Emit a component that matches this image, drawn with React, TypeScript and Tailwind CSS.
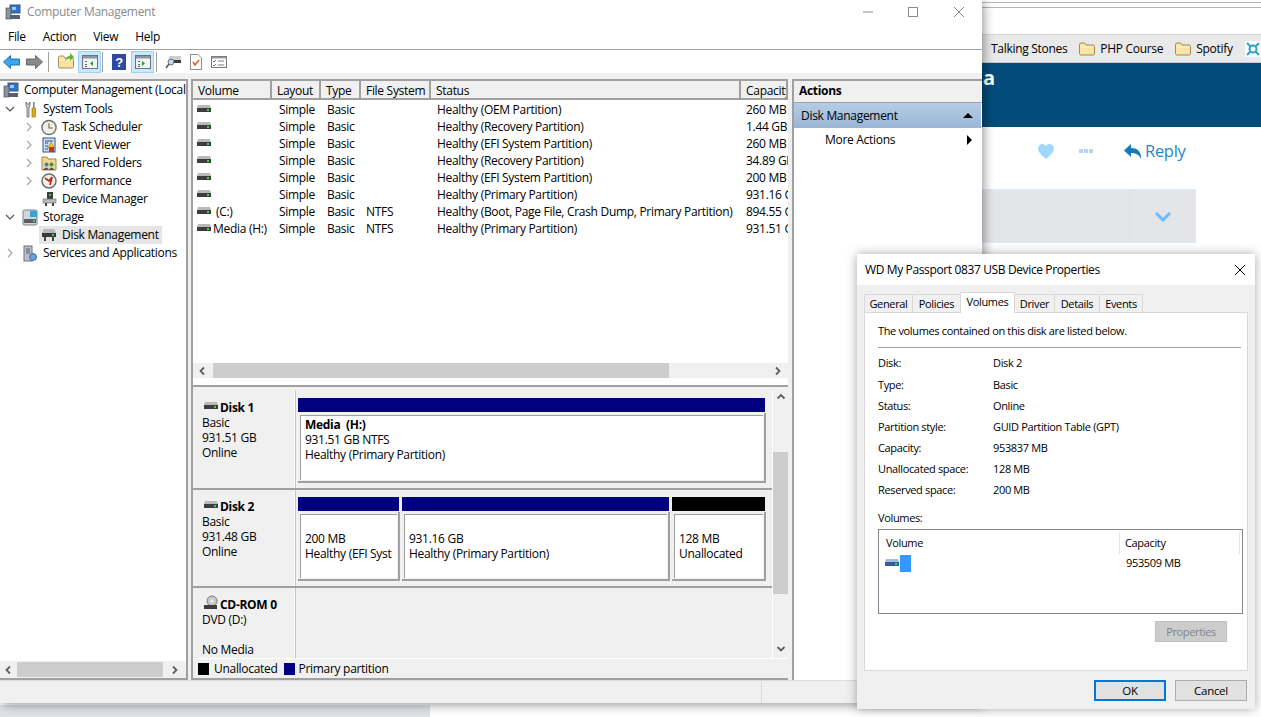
import React from "react";

const Chevron = ({ dir, className = "" }: { dir: "l" | "r" | "u" | "d"; className?: string }) => {
  const d = { l: "M6 1.5 2.5 5 6 8.5", r: "M3 1.5 6.5 5 3 8.5", u: "M1.5 6.5 5 3l3.5 3.5", d: "M1.5 3 5 6.5 8.5 3" }[dir];
  return (
    <svg width="10" height="10" viewBox="0 0 10 10" className={className} fill="none" stroke="#606060" strokeWidth="1.8">
      <path d={d} />
    </svg>
  );
};

const TreeChevron = ({ open }: { open?: boolean }) => (
  <svg width="10" height="10" viewBox="0 0 10 10" fill="none" stroke={open ? "#555" : "#a6a6a6"} strokeWidth="1.2">
    <path d={open ? "M1 3 5 7l4-4" : "M3 1l4 4-4 4"} />
  </svg>
);

const Drive = ({ light }: { light?: boolean }) => (
  <svg width="14" height="8" viewBox="0 0 14 8" className="shrink-0">
    <path d="M1 0h12l1 3H0z" fill={light ? "#9cc0e8" : "#b9b9b9"} />
    <rect x="0" y="3" width="14" height="4" fill={light ? "#2f5f95" : "#3d3d3d"} />
    <rect x="10" y="4" width="2" height="2" fill="#37d35a" />
  </svg>
);

const Folder = () => (
  <svg width="16" height="14" viewBox="0 0 16 14" className="shrink-0">
    <path d="M.5 2.500q0-1.500 1.500-1.500h3.500l1.500 2h7q1.500 0 1.500 1.500v7q0 1.500-1.500 1.500H2q-1.500 0-1.500-1.500z" fill="#fbe3a4" stroke="#9f8a5c" />
    <path d="M1 5h14" stroke="#fff3cf" />
  </svg>
);

const TreeIcon = ({ kind }: { kind: string }) => {
  switch (kind) {
    case "root":
      return (
        <svg width="16" height="16" viewBox="0 0 16 16">
          <rect x="5" y="1" width="10" height="8" fill="#2f6fd6" stroke="#4a5568" />
          <path d="M7 3h4v3H7z" fill="#8fd0ff" />
          <rect x="1" y="4" width="5" height="11" fill="#8a93a0" stroke="#4a5568" strokeWidth=".7" />
          <rect x="5" y="11" width="10" height="4" fill="#58616e" />
        </svg>
      );
    case "tools":
      return (
        <svg width="14" height="17" viewBox="0 0 14 17">
          <path d="M3 1v4l1 1v10h2V6l1-1V1L6 3H4z" fill="#c9ced6" stroke="#555" strokeWidth=".7" />
          <rect x="9" y="7" width="3.500" height="9" fill="#e6ab1d" stroke="#8a6510" strokeWidth=".6" />
          <rect x="10" y="1" width="1.600" height="6" fill="#7b8591" />
        </svg>
      );
    case "clock":
      return (
        <svg width="17" height="17" viewBox="0 0 17 17">
          <circle cx="8.500" cy="8.500" r="7.500" fill="#f3efe2" stroke="#68707c" strokeWidth="1.500" />
          <path d="M8.500 4v5h4" fill="none" stroke="#7a6b3c" strokeWidth="1.200" />
        </svg>
      );
    case "event":
      return (
        <svg width="15" height="16" viewBox="0 0 15 16">
          <rect x="1" y="1" width="12" height="14" fill="#cfe0f5" stroke="#33527e" />
          <path d="M3 4h8M3 6h3M3 9h3M3 12h3" stroke="#35507a" />
          <path d="M9 5l3.500 6h-7z" fill="#f2c21a" stroke="#9b7a10" strokeWidth=".5" />
          <rect x="7" y="10" width="5" height="5" fill="#c4352b" />
        </svg>
      );
    case "shared":
      return (
        <svg width="16" height="16" viewBox="0 0 16 16">
          <path d="M1 2h5l1 2h8v11H1z" fill="#f3d68a" stroke="#a08a4e" />
          <circle cx="5.500" cy="9.500" r="2" fill="#3f7fc6" />
          <circle cx="10.500" cy="9.500" r="2" fill="#3f8f4f" />
          <path d="M2 15q3.500-5 6 0M7.500 15q3-5 6 0" fill="#555" />
        </svg>
      );
    case "perf":
      return (
        <svg width="16" height="16" viewBox="0 0 16 16">
          <circle cx="8" cy="8" r="7" fill="#f6f2ea" stroke="#6b6b6b" strokeWidth="1.500" />
          <path d="M4 5l4 3 3-4-2 8" fill="none" stroke="#c9281e" strokeWidth="1.800" />
        </svg>
      );
    case "device":
      return (
        <svg width="15" height="16" viewBox="0 0 15 16">
          <rect x="5" y="1" width="6" height="7" fill="#3f3f3f" />
          <rect x="7" y="3" width="2" height="2" fill="#35c552" />
          <rect x="1" y="8" width="13" height="4" fill="#b8b8b8" stroke="#6b6b6b" strokeWidth=".6" />
          <path d="M3 12h2v3H3zM10 12h2v3h-2z" fill="#444" />
        </svg>
      );
    case "storage":
      return (
        <svg width="16" height="17" viewBox="0 0 16 17">
          <rect x="1" y="1" width="14" height="15" rx="1.500" fill="#d3d6da" stroke="#7b8088" />
          <rect x="8" y="2" width="7" height="6" fill="#35a4d8" />
          <rect x="2" y="10" width="12" height="4" fill="#5b6068" />
          <rect x="11" y="11" width="2" height="2" fill="#36d35a" />
        </svg>
      );
    case "disk":
      return (
        <svg width="16" height="12" viewBox="0 0 16 12">
          <path d="M3 0h10l2 4H1z" fill="#b8b8b8" />
          <rect x="1" y="4" width="14" height="4" fill="#383838" />
          <rect x="11" y="5" width="2" height="2" fill="#36d35a" />
          <path d="M3 8h2v4H3zM11 8h2v4h-2z" fill="#444" />
        </svg>
      );
    default:
      return (
        <svg width="14" height="17" viewBox="0 0 14 17">
          <rect x="1" y="1" width="8" height="15" fill="#b9c2cc" stroke="#68707c" />
          <path d="M3 4h4M3 6h4M3 8h4" stroke="#525a64" />
          <circle cx="10" cy="12" r="3.500" fill="#6ba5d8" stroke="#3c6d9c" />
        </svg>
      );
  }
};

const tree: { label: string; pad: number; icon: string; chev?: "o" | "c"; selected?: boolean }[] = [
  { label: "Computer Management (Local", pad: 3, icon: "root" },
  { label: "System Tools", pad: 5, icon: "tools", chev: "o" },
  { label: "Task Scheduler", pad: 24, icon: "clock", chev: "c" },
  { label: "Event Viewer", pad: 24, icon: "event", chev: "c" },
  { label: "Shared Folders", pad: 24, icon: "shared", chev: "c" },
  { label: "Performance", pad: 24, icon: "perf", chev: "c" },
  { label: "Device Manager", pad: 24, icon: "device", chev: undefined },
  { label: "Storage", pad: 5, icon: "storage", chev: "o" },
  { label: "Disk Management", pad: 24, icon: "disk", selected: true },
  { label: "Services and Applications", pad: 5, icon: "services", chev: "c" },
];

const cols = [
  { n: "Volume", w: "w-[79px]" },
  { n: "Layout", w: "w-[49px]" },
  { n: "Type", w: "w-[40px]" },
  { n: "File System", w: "w-[70px]" },
  { n: "Status", w: "w-[310px]" },
  { n: "Capacity", w: "w-[47px]" },
];

const rows = [
  ["", "Healthy (OEM Partition)", "", "260 MB"],
  ["", "Healthy (Recovery Partition)", "", "1.44 GB"],
  ["", "Healthy (EFI System Partition)", "", "260 MB"],
  ["", "Healthy (Recovery Partition)", "", "34.89 GB"],
  ["", "Healthy (EFI System Partition)", "", "200 MB"],
  ["", "Healthy (Primary Partition)", "", "931.16 GB"],
  [" (C:)", "Healthy (Boot, Page File, Crash Dump, Primary Partition)", "NTFS", "894.55 GB"],
  ["Media (H:)", "Healthy (Primary Partition)", "NTFS", "931.51 GB"],
];

const Partition = ({ cap, children, className }: { cap: string; children: React.ReactNode; className: string }) => (
  <div className={`flex flex-col ${className}`}>
    <div className={`h-[14px] mr-[1px] shrink-0 ${cap}`} />
    <div className="flex-1 mt-[1px] bg-[#f0f0f0] border-r-2 border-b-2 border-[#a0a0a0] pl-[2px] pt-[2px] pr-[1px] pb-[1px]">
      <div className="h-full bg-white border-l border-t border-[#a0a0a0] pl-[4px] flex flex-col justify-center text-[12px] leading-[15px]">
        {children}
      </div>
    </div>
  </div>
);

const DiskLabel = ({ name, lines, icon }: { name: string; lines: string[]; icon?: boolean }) => (
  <div className="w-[102px] shrink-0 pl-[9px] pt-[8px] text-[12px] leading-[15px] bg-[#f0f0f0] border-r border-white">
    <div className="flex items-center font-bold h-[16px]">
      {icon ? (
        <svg width="16" height="16" viewBox="0 0 16 16" className="-mt-[2px] ml-[1px] mr-[1px] shrink-0">
          <circle cx="9" cy="6" r="5" fill="#c8c8c8" stroke="#7a7a7a" />
          <circle cx="9" cy="6" r="1.500" fill="#f5f5f5" />
          <rect x="1" y="10" width="13" height="4" fill="#3d3d3d" />
        </svg>
      ) : (
        <span className="ml-[2px] mr-[2px] -mt-[3px] flex"><Drive /></span>
      )}
      {name}
    </div>
    {lines.map((l, i) => (
      <div key={i} className="h-[15px]">{l}</div>
    ))}
  </div>
);

const Toggle = ({ play }: { play: "l" | "r" }) => (
  <div className="w-[23px] h-[22px] bg-[#cce8ff] border border-[#99d1ff] flex items-center justify-center">
    <svg width="16" height="14" viewBox="0 0 16 14">
      <rect x=".5" y=".5" width="15" height="13" fill="#f4f4f4" stroke="#6b7280" />
      <rect x="1" y="1" width="14" height="2.500" fill="#8b97a6" />
      <path d="M3 6h2v1H3zM3 9h2v1H3zM3 11h2v1H3z" fill="#5b6470" />
      {play === "l" ? <path d="M11 6v5L8 8.500z" fill="#1f9d3f" /> : <path d="M7 6v5l3-2.500z" fill="#1f9d3f" />}
    </svg>
  </div>
);

const Sep = () => <div className="w-px h-[20px] bg-[#a0a0a0]" />;

const Toolbar = () => (
  <div className="h-[23px] bg-white flex items-center pl-[3px] shrink-0">
    <svg width="17" height="14" viewBox="0 0 17 14" className="mr-[6px]">
      <path d="M7.500.5v3.500h9v6h-9v3.500L.5 7z" fill="#3da5ea" stroke="#1d74b8" />
    </svg>
    <svg width="17" height="14" viewBox="0 0 17 14" className="mr-[5px]">
      <path d="M9.500.5v3.500h-9v6h9v3.500l7-6.500z" fill="#8a8a8a" stroke="#666" />
    </svg>
    <Sep />
    <span className="ml-[9px] mr-[4px] flex relative">
      <Folder />
      <svg width="11" height="11" viewBox="0 0 11 11" className="absolute left-[6px] -top-[3px]">
        <path d="M1 9C2 5 4 4 6 4V1l4 4-4 4V6C4 6 3 7 1 9z" fill="#5fb32e" />
      </svg>
    </span>
    <Toggle play="l" />
    <span className="w-[1px]" />
    <Sep />
    <svg width="14" height="16" viewBox="0 0 14 16" className="ml-[9px] mr-[5px]">
      <rect width="14" height="16" fill="#2f4aa3" />
      <text x="7" y="13" textAnchor="middle" fontSize="13" fontWeight="700" fill="#fff" fontFamily="Liberation Sans">?</text>
    </svg>
    <Toggle play="r" />
    <span className="w-[2px]" />
    <Sep />
    <svg width="16" height="14" viewBox="0 0 16 14" className="ml-[8px] mr-[9px]">
      <rect x="4" y="1" width="12" height="5" fill="#cfcfcf" />
      <rect x="4" y="5" width="12" height="3" fill="#3c3c3c" />
      <circle cx="6" cy="7" r="3" fill="#b7dcf2" stroke="#6b7280" />
      <path d="M4 9 1 13" stroke="#555" strokeWidth="1.500" />
    </svg>
    <svg width="12" height="16" viewBox="0 0 12 16" className="mr-[9px]">
      <path d="M.5.5H8L11.500 4v11.500H.5z" fill="#fff" stroke="#8c8c8c" />
      <path d="M3 8l2 3 4-5" fill="none" stroke="#e0582a" strokeWidth="1.500" />
    </svg>
    <svg width="16" height="12" viewBox="0 0 16 12">
      <rect x=".5" y=".5" width="15" height="11" fill="#fff" stroke="#7a7a7a" />
      <rect x="1" y="1" width="14" height="1.500" fill="#9a9a9a" />
      <path d="M2 5l1 1 2-2M2 9l1 1 2-2" fill="none" stroke="#2f7fd6" />
      <path d="M7 5h6M7 9h6" stroke="#7a7a7a" />
    </svg>
  </div>
);

const Tree = () => (
  <div className="w-[188px] shrink-0 bg-white border-t-2 border-r-2 border-b-2 border-[#a0a0a0] flex flex-col">
    <div className="flex-1 text-[12px]">
      {tree.map((t, i) => (
        <div key={t.label} className={`h-[18px] flex items-center whitespace-nowrap overflow-hidden ${i === 0 ? "" : "translate-y-[1px]"}`} style={{ paddingLeft: t.pad }}>
          {t.icon !== "root" && (
            <span className="w-[10px] mr-[7px] shrink-0 flex">
              {t.chev && <TreeChevron open={t.chev === "o"} />}
            </span>
          )}
          <span className={`flex items-center h-[18px] ${t.selected ? "bg-[#e5e5e5] pr-[3px] -ml-[2px] pl-[2px]" : ""}`}>
            <span className="w-[16px] h-[17px] flex items-center justify-center mr-[3px] shrink-0">
              <TreeIcon kind={t.icon} />
            </span>
            <span className="pl-[2px]">{t.label}</span>
          </span>
        </div>
      ))}
    </div>
    <div className="h-[17px] flex items-center shrink-0 bg-[#f0f0f0]">
      <span className="w-[17px] flex justify-center"><Chevron dir="l" /></span>
      <div className="w-[146px] h-[15px] bg-[#cdcdcd]" />
      <span className="flex-1 flex justify-center"><Chevron dir="r" /></span>
    </div>
  </div>
);

const VolumeList = () => (
  <div className="h-[306px] shrink-0 bg-white flex flex-col border-b-2 border-[#a0a0a0]">
    <div className="flex h-[19px] shrink-0 border-b-2 border-[#a0a0a0]">
      {cols.map((c) => (
        <div key={c.n} className={`${c.w} shrink-0 bg-[#f0f0f0] border-r-2 border-[#a0a0a0] pl-[5px] pt-[1px] text-[12px] leading-[17px] overflow-hidden whitespace-nowrap`}>
          {c.n}
        </div>
      ))}
    </div>
    <div className="flex-1 pt-[1px] overflow-hidden">
      {rows.map((r, i) => (
        <div key={i} className="flex h-[17px] text-[12px] leading-[17px] whitespace-nowrap">
          <div className="w-[79px] shrink-0 pl-[4px] flex items-center -mt-[2px]">
            <Drive />
            <span className={`pt-[2px] ${r[0].startsWith(" ") ? "pl-[5px]" : "pl-[2px]"}`}>{r[0].trim()}</span>
          </div>
          <div className="w-[49px] shrink-0 pl-[7px]">Simple</div>
          <div className="w-[40px] shrink-0 pl-[6px]">Basic</div>
          <div className="w-[70px] shrink-0 pl-[5px]">{r[2]}</div>
          <div className="w-[310px] shrink-0 pl-[6px]">{r[1]}</div>
          <div className="w-[47px] shrink-0 pl-[5px] overflow-hidden">{r[3]}</div>
        </div>
      ))}
    </div>
    <div className="h-[15px] mb-[7px] flex items-center bg-[#f0f0f0] shrink-0">
      <span className="w-[20px] flex justify-center"><Chevron dir="l" /></span>
      <div className="w-[456px] h-[15px] bg-[#cdcdcd]" />
      <div className="flex-1" />
      <span className="w-[20px] flex justify-center"><Chevron dir="r" /></span>
    </div>
  </div>
);

const DiskMap = () => (
  <div className="flex-1 flex flex-col bg-[#f0f0f0] min-h-0">
    <div className="flex-1 flex min-h-0 pt-[4px]">
      <div className="flex-1 flex flex-col min-w-0">
        <div className="h-[99px] flex border-b-2 border-[#a0a0a0] shrink-0">
          <DiskLabel name="Disk 1" lines={["Basic", "931.51 GB", "Online"]} />
          <div className="flex-1 pl-[2px] pr-[6px] pt-[7px] pb-[5px] border-l border-[#c0c0c0]">
            <Partition cap="bg-[#000080]" className="h-full">
              <div className="font-bold">Media&nbsp; (H:)</div>
              <div>931.51 GB NTFS</div>
              <div>Healthy (Primary Partition)</div>
              <div className="h-[15px]" />
              <div className="h-[2px]" />
            </Partition>
          </div>
        </div>
        <div className="h-[98px] flex border-b-2 border-[#a0a0a0] border-l-0 shrink-0">
          <DiskLabel name="Disk 2" lines={["Basic", "931.48 GB", "Online"]} />
          <div className="flex-1 pl-[2px] pr-[6px] pt-[7px] pb-[5px] border-l border-[#c0c0c0] flex gap-[2px]">
            <Partition cap="bg-[#000080]" className="w-[102px] shrink-0">
              <div>200 MB</div>
              <div className="whitespace-nowrap overflow-hidden">Healthy (EFI Syst</div>
              <div className="h-[2px]" />
            </Partition>
            <Partition cap="bg-[#000080]" className="w-[268px] shrink-0">
              <div>931.16 GB</div>
              <div>Healthy (Primary Partition)</div>
              <div className="h-[2px]" />
            </Partition>
            <Partition cap="bg-black" className="flex-1">
              <div>128 MB</div>
              <div>Unallocated</div>
              <div className="h-[2px]" />
            </Partition>
          </div>
        </div>
        <div className="flex-1 flex min-h-0">
          <DiskLabel name="CD-ROM 0" icon lines={["DVD (D:)", "", "No Media"]} />
          <div className="flex-1 border-l border-[#c0c0c0]" />
        </div>
      </div>
      <div className="w-[16px] shrink-0 flex flex-col items-center bg-[#f0f0f0] border-l border-white">
        <span className="h-[12px] mt-[1px] flex"><Chevron dir="u" /></span>
        <div className="w-[15px] h-[142px] mt-[48px] bg-[#cdcdcd]" />
        <div className="flex-1" />
        <span className="h-[12px] mb-[2px] flex"><Chevron dir="d" /></span>
      </div>
    </div>
    <div className="h-[20px] shrink-0 flex items-center pl-[5px] text-[12px] bg-[#f0f0f0] border-t border-white">
      <span className="w-[11px] h-[12px] bg-black mr-[5px]" />
      <span className="mr-[6px]">Unallocated</span>
      <span className="w-[11px] h-[12px] bg-[#000080] mr-[4px]" />
      <span>Primary partition</span>
    </div>
  </div>
);

const Actions = () => (
  <div className="flex-1 ml-[1px] bg-white border-t-2 border-l-2 border-[#a0a0a0] flex flex-col text-[12px]">
    <div className="h-[22px] shrink-0 bg-[#f0f0f0] border-b border-[#a0a0a0] pl-[5px] font-bold leading-[20px]">Actions</div>
    <div className="h-[25px] shrink-0 mr-[1px] bg-gradient-to-b from-[#b5cde6] to-[#9ab5d5] flex items-center pl-[7px] pr-[8px] justify-between">
      <span>Disk Management</span>
      <span className="w-0 h-0 border-l-[5px] border-r-[5px] border-b-[5px] border-l-transparent border-r-transparent border-b-black" />
    </div>
    <div className="h-[23px] shrink-0 flex items-center pl-[31px] pr-[10px] justify-between">
      <span>More Actions</span>
      <span className="w-0 h-0 border-t-[5px] border-b-[5px] border-l-[5px] border-t-transparent border-b-transparent border-l-black" />
    </div>
  </div>
);

const MainWindow = () => (
  <div className="absolute left-0 top-0 w-[982px] h-[703px] bg-white flex flex-col shadow-[2px_2px_10px_rgba(0,0,0,0.4)] text-[#000]">
    <div className="h-[27px] pb-[3px] flex items-center shrink-0">
      <div className="ml-[5px] flex"><TreeIcon kind="root" /></div>
      <span className="ml-[6px] text-[12px] text-[#8a8a8a]">Computer Management</span>
      <div className="flex-1" />
      <svg width="12" height="12" viewBox="0 0 12 12" className="mr-[33px]"><path d="M1 6h10" stroke="#8a8a8a" /></svg>
      <svg width="12" height="12" viewBox="0 0 12 12" className="mr-[34px]"><rect x="1.500" y="1.500" width="9" height="9" fill="none" stroke="#8a8a8a" /></svg>
      <svg width="12" height="12" viewBox="0 0 12 12" className="mr-[17px]"><path d="M1 1l10 10M11 1 1 11" stroke="#8a8a8a" /></svg>
    </div>
    <div className="h-[23px] pb-[2px] flex items-center pl-[8px] gap-[17px] text-[12px] border-b border-[#a0a0a0] shrink-0">
      <span>File</span>
      <span>Action</span>
      <span>View</span>
      <span>Help</span>
    </div>
    <Toolbar />
    <div className="flex-1 bg-[#f0f0f0] flex flex-col min-h-0 pt-[6px]">
      <div className="flex-1 flex min-h-0 gap-[3px]">
        <Tree />
        <div className="w-[597px] shrink-0 flex flex-col border-t-2 border-l-2 border-b-2 border-[#a0a0a0] min-h-0 overflow-hidden">
          <VolumeList />
          <DiskMap />
        </div>
        <Actions />
      </div>
      <div className="h-[23px] shrink-0 border-t border-[#dcdcdc] flex justify-end">
        <div className="w-[221px] border-l border-[#d9d9d9]" />
      </div>
    </div>
  </div>
);

const facts = [
  ["Disk:", "Disk 2"],
  ["Type:", "Basic"],
  ["Status:", "Online"],
  ["Partition style:", "GUID Partition Table (GPT)"],
  ["Capacity:", "953837 MB"],
  ["Unallocated space:", "128 MB"],
  ["Reserved space:", "200 MB"],
];

const tabs = [
  { t: "General", w: "w-[49px]" },
  { t: "Policies", w: "w-[49px]" },
  { t: "Volumes", w: "w-[55px]" },
  { t: "Driver", w: "w-[41px]" },
  { t: "Details", w: "w-[46px]" },
  { t: "Events", w: "w-[44px]" },
];

const Tabs = () => (
  <div className="flex items-end h-[20px] pl-[8px] text-[11px] tracking-[-0.35px] shrink-0">
    {tabs.map(({ t, w }) => {
      const active = t === "Volumes";
      return (
        <div
          key={t}
          className={
            active
              ? `h-[21px] ${w} -mb-px -ml-px z-10 bg-white border border-b-0 border-[#d9d9d9] text-center leading-[18px]`
              : `h-[18px] ${w} bg-[#f0f0f0] border border-b-0 border-[#d9d9d9] -ml-px text-center leading-[17px]`
          }
        >
          {t}
        </div>
      );
    })}
  </div>
);

const Dialog = () => (
  <div className="absolute left-[857px] top-[254px] w-[398px] h-[455px] bg-[#f0f0f0] flex flex-col shadow-[0_0_10px_rgba(0,0,0,0.35)] text-black">
    <div className="h-[31px] bg-white flex items-center justify-between pl-[8px] pr-[9px] text-[12px] tracking-[-0.37px] shrink-0">
      <span>WD My Passport 0837 USB Device Properties</span>
      <svg width="12" height="12" viewBox="0 0 12 12"><path d="M1 1l10 10M11 1 1 11" stroke="#000" /></svg>
    </div>
    <div className="h-[7px] shrink-0" />
    <Tabs />
    <div className="mx-[7px] h-[359px] bg-white border border-[#d9d9d9] flex flex-col pl-[13px] pr-[4px] text-[11px] tracking-[-0.35px] shrink-0">
      <div className="h-[35px] flex items-center shrink-0 border-b border-[#a0a0a0] pt-[2px] mr-[2px]">The volumes contained on this disk are listed below.</div>
      <div className="pt-[5px]">
        {facts.map(([a, b]) => (
          <div key={a} className="flex h-[21.200px] items-center">
            <span className="w-[115px]">{a}</span>
            <span>{b}</span>
          </div>
        ))}
      </div>
      <div className="mt-[5px] h-[23px] flex items-center">Volumes:</div>
      <div className="h-[85px] w-[365px] border border-[#828790] flex flex-col shrink-0">
        <div className="h-[24px] flex shrink-0 pt-[2px]">
          <div className="w-[241px] border-r border-[#e5e5e5] pl-[7px] leading-[21px]">Volume</div>
          <div className="w-[120px] border-r border-[#e5e5e5] pl-[5px] leading-[21px]">Capacity</div>
        </div>
        <div className="flex h-[18px] items-center">
          <div className="w-[241px] pl-[6px] flex items-center">
            <Drive light />
            <span className="ml-[1px] w-[11px] h-[17px] bg-[#3399ff]" />
          </div>
          <div className="pl-[6px]">953509 MB</div>
        </div>
      </div>
      <div className="flex justify-end mt-[7px] pr-[16px]">
        <div className="w-[72px] h-[21px] bg-[#cccccc] border border-[#bfbfbf] text-[#838383] flex items-center justify-center">Properties</div>
      </div>
    </div>
    <div className="flex justify-end gap-[9px] pr-[8px] pt-[9px] text-[11.500px] tracking-[-0.3px]">
      <div className="w-[72px] h-[21px] bg-[#e1e1e1] border-2 border-[#0078d7] flex items-center justify-center">OK</div>
      <div className="w-[72px] h-[21px] bg-[#e1e1e1] border border-[#adadad] flex items-center justify-center">Cancel</div>
    </div>
  </div>
);

const Browser = () => (
  <div className="h-[717px] ml-[982px] flex flex-col text-black">
    <div className="h-[35px] shrink-0 pt-[2px] border-b border-[#d4d4d4]">
      <div className="h-px bg-[#b5b5b5]" />
      <div className="h-[4px]" />
      <div className="h-px bg-[#b5b5b5]" />
    </div>
    <div className="h-[28px] shrink-0 bg-[#e9e9e9] flex items-center pl-[9px] text-[12px] whitespace-nowrap overflow-hidden border-b border-[#c9c9c9]">
      <span>Talking Stones</span>
      <span className="ml-[12px] mr-[5px] flex"><Folder /></span>
      <span>PHP Course</span>
      <span className="ml-[12px] mr-[5px] flex"><Folder /></span>
      <span>Spotify</span>
      <svg width="16" height="16" viewBox="0 0 16 16" className="ml-[12px] shrink-0 bg-white">
        <circle cx="8" cy="8" r="3.500" fill="none" stroke="#2b9fc4" strokeWidth="2" />
        <path d="M2 2l3 3M14 2l-3 3M2 14l3-3M14 14l-3-3" stroke="#2b9fc4" strokeWidth="2" />
      </svg>
    </div>
    <div className="h-[64px] shrink-0 bg-[#034c7a] text-white font-bold text-[20px] leading-[30px] pl-[1px]">a</div>
    <div className="h-[62px] shrink-0 flex items-center pl-[56px] pb-[14px]">
      <svg width="16" height="15" viewBox="0 0 16 15">
        <path d="M8 15C2 10 0 7.500 0 4.500 0 1.500 2.500 0 4.500 0 6 0 7.300 .8 8 2 8.700 .8 10 0 11.500 0 13.500 0 16 1.500 16 4.500 16 7.500 14 10 8 15z" fill="#a0d8ff" />
      </svg>
      <span className="ml-[25px] flex gap-[1px]">
        <i className="w-[4px] h-[4px] bg-[#b5d7f0]" /><i className="w-[4px] h-[4px] bg-[#b5d7f0]" /><i className="w-[4px] h-[4px] bg-[#b5d7f0]" />
      </span>
      <svg width="17" height="15" viewBox="0 0 17 15" className="ml-[31px]">
        <path d="M7 0v4c6 0 10 3 10 10v1c-1.500-3.500-4-6-10-6v4L0 6.500z" fill="#1478bd" />
      </svg>
      <span className="ml-[4px] text-[16.500px] text-[#2a86c8]">Reply</span>
    </div>
    <div className="h-[54px] w-[214px] shrink-0 bg-[#e3e5e8] border border-l-0 border-[#dcebf7] flex">
      <div className="w-[148px] border-r border-[#cfe6f7]" />
      <div className="flex-1 flex items-center justify-center pt-[2px]">
        <svg width="16" height="10" viewBox="0 0 16 10"><path d="M1 1l7 7 7-7" fill="none" stroke="#6bbcff" strokeWidth="3" /></svg>
      </div>
    </div>
    <div className="flex-1" />
  </div>
);

export default function App() {
  return (
    <div className="relative w-[1261px] h-[717px] overflow-hidden bg-white font-['Open_Sans','Noto_Sans',sans-serif] tracking-[-0.3px]">
      <Browser />
      <div className="absolute left-0 bottom-0 w-[430px] h-[12px] bg-[#dfe3e8]" />
      <MainWindow />
      <Dialog />
    </div>
  );
}
